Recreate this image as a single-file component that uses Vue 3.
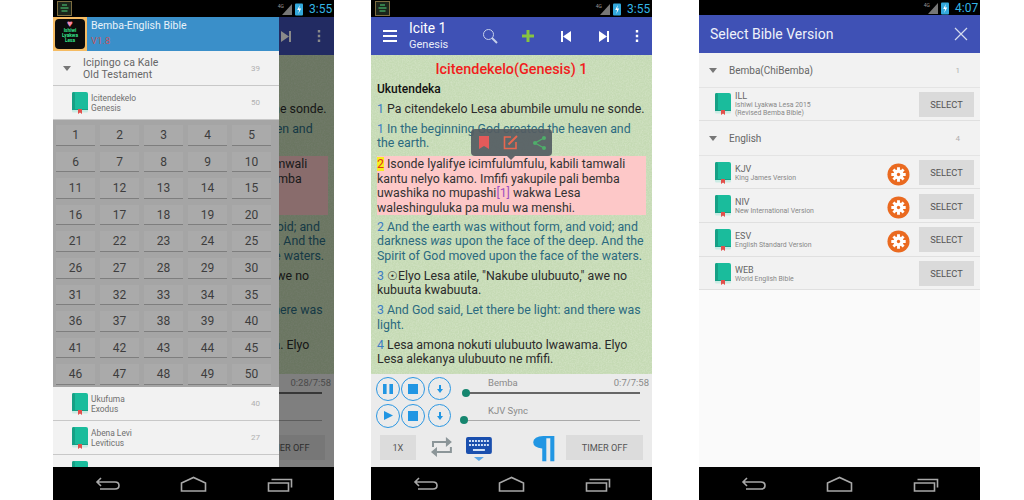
<script setup>
const readers = [
  { id: 'drawer', time: '0:28/7:58' },
  { id: 'main', time: '0:7/7:58' }
]

const chapters = Array.from({ length: 50 }, (_, i) => i + 1)

const bembaVersions = [
  { code: 'ILL', name: 'Ishiwi Lyakwa Lesa 2015', note: '(Revised Bemba Bible)' }
]

const englishVersions = [
  { code: 'KJV', name: 'King James Version', gear: true },
  { code: 'NIV', name: 'New International Version', gear: true },
  { code: 'ESV', name: 'English Standard Version', gear: true },
  { code: 'WEB', name: 'World English Bible', gear: false }
]
</script>

<template>
  <div class="page">
    <!-- shared icons -->
    <svg class="defs" aria-hidden="true">
      <symbol id="book" viewBox="0 0 18 22">
        <rect x="1" y="0" width="16" height="19" rx="2" fill="#1abc9c" />
        <rect x="1" y="0" width="3" height="19" rx="1.5" fill="#16a085" />
        <rect x="1" y="17" width="16" height="3.5" rx="1.5" fill="#c9ece4" />
        <path d="M1 17.5h16" stroke="#169f86" stroke-width="1" />
        <path d="M7 17h4v5l-2-1.4L7 22z" fill="#e2504c" />
      </symbol>
      <symbol id="gear" viewBox="0 0 24 24">
        <circle cx="12" cy="12" r="11.5" fill="#ea6a20" />
        <g stroke="#fff" stroke-width="3">
          <path d="M12 4.5v15M4.5 12h15M6.7 6.7l10.6 10.6M17.3 6.7L6.7 17.3" />
        </g>
        <circle cx="12" cy="12" r="5.2" fill="#fff" />
        <circle cx="12" cy="12" r="1.7" fill="#ea6a20" />
      </symbol>
      <symbol id="nav" viewBox="0 0 281 33">
        <g fill="none" stroke="#a8a8a8" stroke-width="1.6">
          <path d="M45 15h17q4 0 4 3.500t-4 3.500h-15M48 11l-4 4 4 4" />
          <path d="M128.500 24v-8l12-5.500 12 5.500v8z" />
          <path d="M215.500 16h20v8h-20zM218.500 12.500h20v8" />
        </g>
      </symbol>
      <symbol id="signal" viewBox="0 0 22 14">
        <path d="M1 13L11 2v11z" fill="#777" />
        <rect x="14" y="1.500" width="8" height="12" rx="1" fill="#33a9dc" />
        <path d="M18.800 3l-2.600 5h2l-1 4 3-5.500h-2z" fill="#fff" />
      </symbol>
    </svg>

    <!-- phones 1 and 2 share the reading screen -->
    <section v-for="reader in readers" :key="reader.id" class="phone">
      <div class="status">
        <svg class="app-mini" viewBox="0 0 15 15">
          <rect x=".5" y=".5" width="14" height="14" fill="#1b241a" stroke="#7d6c40" />
          <path d="M5 4h5M3.500 7h8M4.500 10h6" stroke="#3f9a5c" stroke-width="1.300" />
        </svg>
        <span class="net">4G</span>
        <svg class="signal"><use href="#signal" /></svg>
        <span class="clock">3:55</span>
      </div>

      <div class="screen">
        <header class="bar">
          <span class="bar-cell menu">
            <svg width="14" height="12" viewBox="0 0 14 12"><path d="M0 1h14M0 6h14M0 11h14" stroke="#fff" stroke-width="2" /></svg>
          </span>
          <div class="bar-title">
            <div class="t1">Icite 1</div>
            <div class="t2">Genesis</div>
          </div>
          <span class="bar-cell">
            <svg width="16" height="16" viewBox="0 0 16 16" fill="none" stroke="#c6d0ea"><circle cx="6.500" cy="6.500" r="5" /><path d="M10 10l5 5" stroke-width="2" /></svg>
          </span>
          <span class="bar-cell">
            <svg width="12" height="12" viewBox="0 0 12 12"><path d="M6 0v12M0 6h12" stroke="#86c440" stroke-width="3" /></svg>
          </span>
          <span class="bar-cell">
            <svg width="10" height="11" viewBox="0 0 10 11"><path d="M0 0h2v11H0zM10 0v11L2 5.500z" fill="#fff" /></svg>
          </span>
          <span class="bar-cell">
            <svg width="10" height="11" viewBox="0 0 10 11"><path d="M10 0H8v11h2zM0 0v11l8-5.500z" fill="#fff" /></svg>
          </span>
          <span class="bar-cell dots">
            <svg width="4" height="12" viewBox="0 0 4 12"><path d="M.8 0h2.400v2.400H.8zM.8 4.800h2.400v2.400H.8zM.8 9.600h2.400V12H.8z" fill="#fff" /></svg>
          </span>
        </header>

        <article class="reading">
          <svg class="paper" aria-hidden="true">
            <filter :id="'grain-' + reader.id">
              <feTurbulence type="fractalNoise" baseFrequency=".7" numOctaves="2" seed="4" />
              <feColorMatrix values="0 0 0 0 .94  0 0 0 0 .96  0 0 0 0 .9  .9 0 0 0 -.3" />
            </filter>
            <rect width="100%" height="100%" :filter="'url(#grain-' + reader.id + ')'" />
          </svg>
          <h1>Icitendekelo(Genesis) 1</h1>
          <h2>Ukutendeka</h2>
          <p><b>1</b> Pa citendekelo Lesa abumbile umulu ne sonde.</p>
          <p class="en"><b>1</b> In the beginning God created the heaven and the earth.</p>
          <p class="picked"><b class="mark">2</b> Isonde lyalifye icimfulumfulu, kabili tamwali kantu nelyo kamo. Imfifi yakupile pali bemba uwashika no mupashi<i class="ref">[1]</i> wakwa Lesa waleshinguluka pa mulu wa menshi.</p>
          <p class="en"><b>2</b> And the earth was without form, and void; and darkness <i>was</i> upon the face of the deep. And the Spirit of God moved upon the face of the waters.</p>
          <p><b>3</b> ☉Elyo Lesa atile, "Nakube ulubuuto," awe no kubuuta kwabuuta.</p>
          <p class="en"><b>3</b> And God said, Let there be light: and there was light.</p>
          <p><b>4</b> Lesa amona nokuti ulubuuto lwawama. Elyo Lesa alekanya ulubuuto ne mfifi.</p>

          <div v-if="reader.id === 'main'" class="popover">
            <svg width="10" height="13" viewBox="0 0 10 13"><path d="M0 0h10v13L5 10l-5 3z" fill="#e25a5a" /></svg>
            <svg width="15" height="15" viewBox="0 0 15 15" fill="none" stroke="#e8674f" stroke-width="1.600"><path d="M8 2H1.500v11.500H13V7" /><path d="M5.500 9.500L14 1" stroke-width="2" /></svg>
            <svg width="13" height="14" viewBox="0 0 13 14"><path d="M11 2L2 7l9 5" fill="none" stroke="#4fae6a" stroke-width="1.300" /><circle cx="11" cy="2" r="2" fill="#4fae6a" /><circle cx="2" cy="7" r="2" fill="#4fae6a" /><circle cx="11" cy="12" r="2" fill="#4fae6a" /></svg>
          </div>
        </article>

        <footer class="player">
          <div class="track-row">
            <div class="controls">
              <span class="round"><svg width="10" height="10" viewBox="0 0 10 10"><path d="M0 0h3.600v10H0zM6.400 0H10v10H6.400z" fill="#2196e3" /></svg></span>
              <span class="round"><svg width="10" height="10" viewBox="0 0 10 10"><path d="M0 0h10v10H0z" fill="#2196e3" /></svg></span>
              <span class="round small"><svg width="6" height="8" viewBox="0 0 6 8"><path d="M2 0h2v4h2L3 8 0 4h2z" fill="#2196e3" /></svg></span>
            </div>
            <div class="track">
              <div class="track-text"><span>Bemba</span><span>{{ reader.time }}</span></div>
              <div class="slider thick"><i class="knob"></i></div>
            </div>
          </div>
          <div class="track-row second">
            <div class="controls">
              <span class="round"><svg width="9" height="9" viewBox="0 0 9 9"><path d="M0 0l9 4.500L0 9z" fill="#2196e3" /></svg></span>
              <span class="round"><svg width="10" height="10" viewBox="0 0 10 10"><path d="M0 0h10v10H0z" fill="#2196e3" /></svg></span>
              <span class="round small"><svg width="6" height="8" viewBox="0 0 6 8"><path d="M2 0h2v4h2L3 8 0 4h2z" fill="#2196e3" /></svg></span>
            </div>
            <div class="track">
              <div class="track-text"><span>KJV Sync</span></div>
              <div class="slider"><i class="knob"></i></div>
            </div>
          </div>
          <div class="tools">
            <span class="flat speed">1X</span>
            <svg class="repeat" width="23" height="22" viewBox="0 0 23 22" fill="none" stroke="#8b9598" stroke-width="2"><path d="M3 11V6h14M21 11v5H7" /><path d="M16 1l6 5-6 5zM7 11l-6 5 6 5z" fill="#8b9598" stroke="none" /></svg>
            <svg class="keys" width="26" height="25" viewBox="0 0 26 25"><rect width="26" height="17" rx="2" fill="#1a4fae" /><path d="M3 4h20M3 8h20" stroke="#cfe0f7" stroke-width="2" stroke-dasharray="2 1" /><path d="M7 13h12" stroke="#cfe0f7" stroke-width="2" /><path d="M8 20h10l-5 4z" fill="#5aa6e8" /></svg>
            <span class="pilcrow">¶</span>
            <span class="flat timer">TIMER OFF</span>
          </div>
        </footer>

        <!-- book drawer lies over the dimmed reading screen -->
        <template v-if="reader.id === 'drawer'">
          <div class="dim"></div>
          <aside class="drawer">
            <div class="drawer-head">
              <div class="logo">
                <div class="logo-in">
                  <span class="heart">♥</span>
                  <span>Ishiwi</span><span>Lyakwa</span><span>Lesa</span>
                </div>
              </div>
              <div class="drawer-title">
                <div>Bemba-English Bible</div>
                <div class="ver">V1.8</div>
              </div>
            </div>
            <div class="group">
              <i class="caret"></i>
              <div class="group-name"><div>Icipingo ca Kale</div><div>Old Testament</div></div>
              <span class="count">39</span>
            </div>
            <div class="book-row">
              <svg class="book"><use href="#book" /></svg>
              <div class="book-name"><div>Icitendekelo</div><div>Genesis</div></div>
              <span class="count">50</span>
            </div>
            <div class="numbers">
              <span v-for="n in chapters" :key="n" class="num">{{ n }}</span>
            </div>
            <div class="book-row">
              <svg class="book"><use href="#book" /></svg>
              <div class="book-name"><div>Ukufuma</div><div>Exodus</div></div>
              <span class="count">40</span>
            </div>
            <div class="book-row">
              <svg class="book"><use href="#book" /></svg>
              <div class="book-name"><div>Abena Levi</div><div>Leviticus</div></div>
              <span class="count">27</span>
            </div>
            <div class="book-row">
              <svg class="book"><use href="#book" /></svg>
            </div>
          </aside>
        </template>
      </div>

      <svg class="nav"><use href="#nav" /></svg>
    </section>

    <!-- phone 3: version picker -->
    <section class="phone picker">
      <div class="status short">
        <span class="net">4G</span>
        <svg class="signal"><use href="#signal" /></svg>
        <span class="clock">4:07</span>
      </div>
      <div class="screen light">
        <header class="bar select-bar">
          <span>Select Bible Version</span>
          <svg width="14" height="14" viewBox="0 0 14 14"><path d="M1 1l12 12M13 1L1 13" stroke="#d5dbef" stroke-width="1.200" /></svg>
        </header>
        <div class="versions">
          <div class="v-group">
            <i class="caret"></i><span class="v-lang">Bemba(ChiBemba)</span><span class="count">1</span>
          </div>
          <div v-for="v in bembaVersions" :key="v.code" class="v-row">
            <svg class="book"><use href="#book" /></svg>
            <div class="v-name"><div class="code">{{ v.code }}</div><div>{{ v.name }}</div><div>{{ v.note }}</div></div>
            <span class="select">SELECT</span>
          </div>
          <div class="v-group">
            <i class="caret"></i><span class="v-lang">English</span><span class="count">4</span>
          </div>
          <div v-for="v in englishVersions" :key="v.code" class="v-row">
            <svg class="book"><use href="#book" /></svg>
            <div class="v-name"><div class="code">{{ v.code }}</div><div>{{ v.name }}</div></div>
            <svg v-if="v.gear" class="gear"><use href="#gear" /></svg>
            <span class="select">SELECT</span>
          </div>
        </div>
      </div>
      <svg class="nav"><use href="#nav" /></svg>
    </section>
  </div>
</template>

<style scoped>
.page {
  width: 1024px;
  height: 500px;
  display: flex;
  padding-left: 53px;
  box-sizing: border-box;
  background: #fff;
  overflow: hidden;
  font-family: Roboto, "Liberation Sans", sans-serif;
}
.defs { position: absolute; width: 0; height: 0; }
.phone {
  width: 281px;
  height: 500px;
  display: flex;
  flex-direction: column;
  background: #000;
  margin-right: 37px;
  flex: none;
}
.picker { margin-left: 10px; margin-right: 0; }

.status {
  height: 17px;
  display: flex;
  align-items: center;
  padding: 0 4px;
  flex: none;
}
.status.short { height: 15px; }
.app-mini { width: 15px; height: 15px; }
.net { margin-left: auto; font-size: 5px; color: #999; margin-right: -3px; margin-top: -6px; }
.signal { width: 22px; height: 14px; }
.clock { color: #33b5e5; font-size: 12px; margin-left: 6px; width: 21px; }

.screen {
  position: relative;
  height: 450px;
  display: flex;
  flex-direction: column;
  overflow: hidden;
  flex: none;
}
.screen.light { height: 452px; background: #fafafa; }
.nav { width: 281px; height: 33px; flex: none; }

.bar {
  height: 38px;
  background: #3f51b5;
  display: flex;
  align-items: center;
  color: #fff;
  flex: none;
}
.bar-cell { width: 38px; display: flex; justify-content: center; flex: none; }
.bar-cell.dots { width: 28px; }
.bar-title { width: 62px; flex: none; }
.t1 { font-size: 13.800px; line-height: 17px; }
.t2 { font-size: 11px; line-height: 15px; color: #e8ecf8; }

.reading {
  position: relative;
  height: 319px;
  flex: none;
  padding: 6px 6px 0;
  box-sizing: border-box;
  background: #c5dab4;
  overflow: hidden;
  color: #2b2b2b;
  font-size: 12.350px;
  line-height: 14.500px;
}
.paper { position: absolute; inset: 0; width: 100%; height: 100%; opacity: .5; }
.reading > h1, .reading > h2, .reading > p { position: relative; margin: 0; }
.reading > h1 {
  font-size: 14.400px;
  font-weight: 500;
  line-height: 18px;
  text-align: center;
  color: #f11d1d;
}
.reading > h2 { font-size: 12px; font-weight: 500; line-height: 19px; color: #111; margin-top: 1px; }
.reading > p { margin-top: 5.500px; }
.reading > h2 + p { margin-top: 2.500px; }
.reading b { font-weight: 400; color: #3d7cc4; }
.reading .en { color: #2b6a80; }
.reading > .picked { background: #fdc8c8; color: #333; padding-top: 1px; margin-bottom: -1px; }
.reading .mark { color: #e0301e; background: #f7ee1f; }
.reading .ref { font-style: normal; color: #a050c0; }
.popover {
  position: absolute;
  left: 100px;
  top: 74px;
  width: 81px;
  height: 27px;
  border-radius: 4px;
  background: rgba(84, 92, 98, .92);
  display: flex;
  align-items: center;
  justify-content: space-between;
  padding: 0 6.500px 0 8px;
  box-sizing: border-box;
}
.popover::after {
  content: "";
  position: absolute;
  left: 36px;
  bottom: -4px;
  border: 4px solid transparent;
  border-top-color: rgba(84, 92, 98, .92);
  border-bottom: 0;
}

.player {
  flex: 1;
  background: #ebebeb;
  padding: 1px 9px 0 5px;
  color: #777;
}
.track-row { display: flex; height: 27px; align-items: center; }
.controls { display: flex; width: 84px; gap: 1px; flex: none; align-items: center; }
.round {
  width: 24px;
  height: 24px;
  border: 1px solid #2b97e2;
  border-radius: 50%;
  display: flex;
  align-items: center;
  justify-content: center;
  box-sizing: border-box;
}
.round.small { width: 23px; height: 23px; margin-left: 2px; }
.track { flex: 1; padding-left: 8px; margin-right: -6px; }
.track-text { display: flex; justify-content: space-between; font-size: 9.500px; line-height: 11px; padding-left: 20px; color: #8a8a8a; margin-top: -6px; }
.slider { position: relative; height: 1px; background: #aaa; margin-top: 4px; margin-right: 9px; margin-left: -7px; }
.slider.thick { height: 2px; background: #666; margin-top: 4px; margin-left: -5px; }
.knob {
  position: absolute;
  left: -1px;
  top: -3.500px;
  width: 8px;
  height: 8px;
  border-radius: 50%;
  background: #16866f;
}
.tools { display: flex; align-items: center; margin-top: 5px; margin-left: 4px; height: 26px; }
.flat {
  background: #dcdcdc;
  height: 25px;
  line-height: 25px;
  text-align: center;
  font-size: 9.200px;
  color: #555;
}
.speed { width: 36px; }
.repeat { margin-left: 14px; }
.keys { margin-left: 13px; margin-top: 5px; }
.pilcrow {
  margin-left: 43px;
  width: 32px;
  font-size: 31px;
  line-height: 26px;
  font-weight: 700;
  color: #2196e3;
  font-family: "DejaVu Sans", sans-serif;
  transform: scaleX(1.4);
  transform-origin: 11px 50%;
}
.timer { width: 77px; }

.dim { position: absolute; inset: 0; background: rgba(0, 0, 0, .46); }
.drawer {
  position: absolute;
  left: 0;
  top: 0;
  bottom: 0;
  width: 226px;
  background: #f2f2f2;
  overflow: hidden;
}
.drawer-head { height: 34px; background: #3a8fc9; display: flex; }
.logo { width: 34px; height: 34px; background: #f5bb62; padding: 2px 2px; box-sizing: border-box; }
.logo-in {
  height: 100%;
  background: #0b0b0b;
  border-radius: 4px;
  display: flex;
  flex-direction: column;
  align-items: center;
  color: #35e28a;
  font-size: 4.800px;
  line-height: 5px;
  font-weight: 700;
}
.heart { color: #f58ab0; font-size: 10px; line-height: 10px; margin-bottom: -1px; }
.drawer-title { color: #e8f2fa; font-size: 10.500px; margin-left: 4px; line-height: 12px; padding-top: 3px; }
.ver { color: #c2565e; font-size: 9.500px; margin-top: 3px; }
.group {
  height: 33px;
  border-bottom: 1px solid #c8c8c8;
  display: flex;
  align-items: center;
  padding: 1px 19px 0 10px;
}
.caret {
  width: 0;
  height: 0;
  border: 4px solid transparent;
  border-top: 5px solid #777;
  border-bottom: 0;
  flex: none;
}
.group-name { margin-left: 12px; font-size: 10.500px; line-height: 12px; color: #666; letter-spacing: .1px; }
.count { margin-left: auto; font-size: 8px; color: #b0b0b0; }
.book-row {
  height: 33px;
  border-bottom: 1px solid #c8c8c8;
  display: flex;
  align-items: center;
  padding: 0 19px 0 18px;
  flex: none;
}
.book { width: 18px; height: 22px; flex: none; }
.book-name { margin-left: 2px; font-size: 8.400px; line-height: 10px; color: #6f6f6f; }
.numbers {
  height: 267px;
  background: #a5a5a5;
  display: grid;
  grid-template-columns: repeat(5, 39px);
  grid-auto-rows: 20.600px;
  column-gap: 5px;
  row-gap: 6px;
  padding: 5px 3px 0;
  box-sizing: border-box;
}
.num {
  background: #aaaaaa;
  border-bottom: 1px solid #7e7e7e;
  text-align: center;
  font-size: 12px;
  line-height: 20px;
  color: #3d3d3d;
}

.select-bar { justify-content: space-between; padding: 0 12px 0 11px; font-size: 14px; font-weight: 400; color: #eef1fa; }
.versions { background: #f2f2f2; }
.v-group {
  height: 34.500px;
  display: flex;
  align-items: center;
  padding: 1px 20px 0 10px;
  border-bottom: 1px solid #e4e4e4;
  box-sizing: border-box;
}
.v-lang { margin-left: 12px; font-size: 10px; color: #666; }
.v-row {
  height: 33.700px;
  display: flex;
  align-items: center;
  padding: 1px 6px 0 15px;
  border-bottom: 1px solid #e0e0e0;
  box-sizing: border-box;
}
.v-name { margin-left: 3px; font-size: 6.900px; line-height: 8px; color: #888; flex: 1; }
.v-name .code { font-size: 9px; line-height: 10px; color: #666; }
.gear { width: 23px; height: 23px; margin: 3px 9px 0 0; flex: none; }
.select {
  width: 55px;
  height: 25px;
  line-height: 25px;
  text-align: center;
  background: #dadada;
  font-size: 9.300px;
  color: #555;
  flex: none;
}
</style>
